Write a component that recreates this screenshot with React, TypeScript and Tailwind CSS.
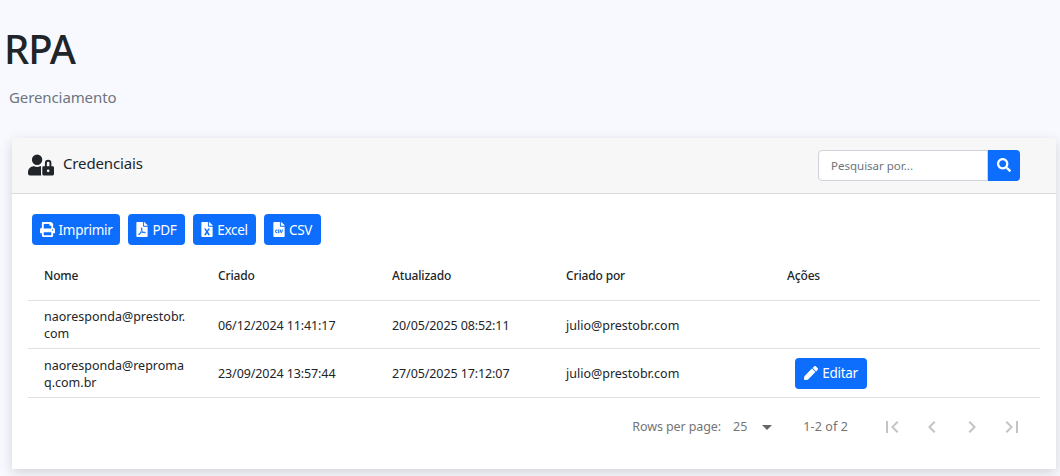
import React from 'react';
import { FaUserLock, FaPrint, FaFilePdf, FaFileExcel, FaFileCsv, FaSearch, FaPen } from 'react-icons/fa';
import { MdFirstPage, MdLastPage, MdChevronLeft, MdChevronRight } from 'react-icons/md';

const font = { fontFamily: '"Noto Sans", "Open Sans", sans-serif' };

const rows = [
  { nome: 'naoresponda@prestobr.com', criado: '06/12/2024 11:41:17', atualizado: '20/05/2025 08:52:11', por: 'julio@prestobr.com', edit: false },
  { nome: 'naoresponda@repromaq.com.br', criado: '23/09/2024 13:57:44', atualizado: '27/05/2025 17:12:07', por: 'julio@prestobr.com', edit: true },
];

const ActionButton = ({ icon, label, width }: { icon: React.ReactNode; label: string; width: string }) => (
  <button className={`${width} h-[31px] flex items-center justify-center gap-[4px] bg-[#0d6efd] text-white text-[13.5px] tracking-[-0.3px] rounded-[4px]`}>
    {icon}
    <span className="pt-[1px]">{label}</span>
  </button>
);

const App = () => {
  return (
    <div className="min-h-[476px] h-[476px] overflow-hidden bg-[#f8f9ff] text-[#212529]" style={font}>
      <div className="pl-[4px] pt-[25px] h-[138px]">
        <h1 className="text-[40px] leading-[48px] font-medium tracking-[-1px]">RPA</h1>
        <p className="pl-[5px] mt-[13px] text-[15px] leading-[22px] text-[#6c757d] tracking-[-0.1px]">Gerenciamento</p>
      </div>

      <div className="ml-[12px] mr-[4px] h-[331px] bg-white shadow-[0_4px_12px_rgba(0,0,0,0.15)]">
        {/* Header */}
        <div className="h-[56px] flex items-center justify-between pl-[16px] pr-[36px] bg-[#f7f7f7] border-b border-[#d9d9d9]">
          <div className="flex items-center gap-[9px]">
            <FaUserLock className="text-[#212529] text-[26px] -mt-[2px]" />
            <span className="text-[15px] -mt-[5px] tracking-[-0.15px]">Credenciais</span>
          </div>
          <div className="flex -mt-[1px]">
            <input
              placeholder="Pesquisar por..."
              className="w-[170px] h-[31px] px-[12px] pt-[1px] text-[11.5px] bg-white border border-[#ced4da] rounded-l-[4px] placeholder:text-[#6c757d]"
            />
            <button className="w-[32px] h-[31px] flex items-center justify-center bg-[#0d6efd] text-white rounded-r-[4px]">
              <FaSearch className="text-[14px]" />
            </button>
          </div>
        </div>

        {/* Body */}
        <div className="px-[16px] pt-[20px]">
          <div className="flex gap-[8px] pl-[4px]">
            <ActionButton width="w-[88px]" icon={<FaPrint className="text-[15px]" />} label="Imprimir" />
            <ActionButton width="w-[57px]" icon={<FaFilePdf className="w-[12px] h-[15px]" />} label="PDF" />
            <ActionButton width="w-[63px]" icon={<FaFileExcel className="w-[12px] h-[15px]" />} label="Excel" />
            <ActionButton width="w-[57px]" icon={<FaFileCsv className="w-[12px] h-[15px]" />} label="CSV" />
          </div>

          <div className="mt-[7px] text-[12.5px]">
            <div className="h-[49px] grid grid-cols-[174px_174px_174px_221px_1fr] items-center border-b border-[#e0e0e0] font-medium text-[12px] tracking-[-0.15px]">
              <div className="pl-[16px]">Nome</div>
              <div className="pl-[16px]">Criado</div>
              <div className="pl-[16px]">Atualizado</div>
              <div className="pl-[16px]">Criado por</div>
              <div className="pl-[16px]">Ações</div>
            </div>
            {rows.map((r) => (
              <div key={r.nome} className="h-[48px] last:h-[49px] grid grid-cols-[174px_174px_174px_221px_1fr] items-center border-b border-[#e0e0e0]">
                <div className="px-[16px] pt-[1px] break-all leading-[17px]">{r.nome}</div>
                <div className="pl-[16px] pt-[3px] tracking-[-0.1px]">{r.criado}</div>
                <div className="pl-[16px] pt-[3px] tracking-[-0.1px]">{r.atualizado}</div>
                <div className="pl-[16px] pt-[3px]">{r.por}</div>
                <div className="pl-[24px]">
                  {r.edit && <ActionButton width="w-[72px]" icon={<FaPen className="text-[14px]" />} label="Editar" />}
                </div>
              </div>
            ))}
          </div>

          <div className="h-[58px] flex items-center justify-end text-[12.5px] text-[#757575]">
            <span className="tracking-[-0.1px]">Rows per page:</span>
            <span className="ml-[12px]">25</span>
            <span className="ml-[15px] w-0 h-0 border-x-[5px] border-x-transparent border-t-[5px] border-t-[#666]" />
            <span className="ml-[31px] tracking-[0.1px]">1-2 of 2</span>
            <div className="ml-[32px] mr-[16px] flex gap-[16px] text-[#c4c4c4]">
              <MdFirstPage className="text-[24px]" />
              <MdChevronLeft className="text-[24px]" />
              <MdChevronRight className="text-[24px]" />
              <MdLastPage className="text-[24px]" />
            </div>
          </div>
        </div>
      </div>
    </div>
  );
};

export default App;
